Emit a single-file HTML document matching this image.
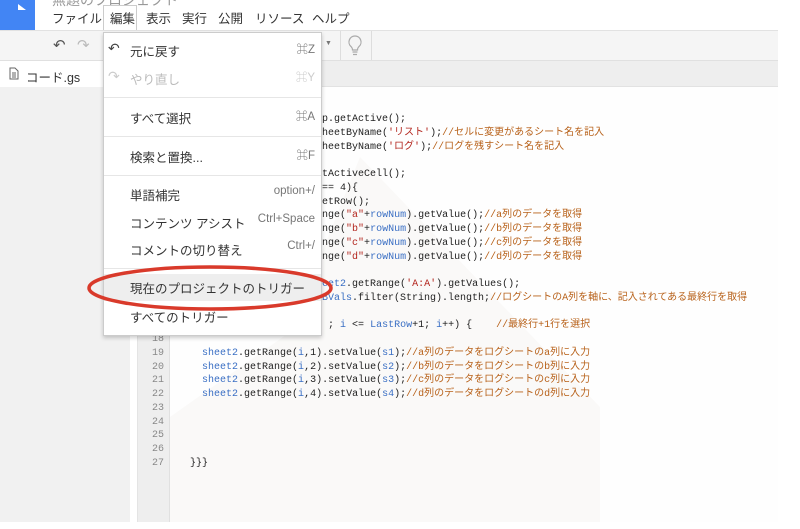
<!DOCTYPE html>
<html><head><meta charset="utf-8"><style>
*{margin:0;padding:0;box-sizing:border-box}
body{width:800px;height:529px;overflow:hidden;background:#fff;font-family:"Liberation Sans","Noto Sans CJK JP",sans-serif;position:relative}
.a{position:absolute;white-space:nowrap}
.mb{font-size:12.5px;color:#333;top:8px}
.code{font-family:"Liberation Mono","Noto Sans CJK JP",monospace;font-size:10px;color:#222;left:190px;line-height:13.75px;white-space:pre}
.c{color:#b8621b}.s{color:#b3261e}.v{color:#3a6fc4}
.ln{font-family:"Liberation Mono",monospace;font-size:10px;color:#888;left:140px;width:24px;text-align:right}
.mi{position:absolute;left:0;width:217px;height:27px;font-size:12.5px;color:#333}
.mi span{position:absolute;left:26px;top:4px}
.mi b{position:absolute;right:6px;top:4px;font-weight:normal;color:#777;font-size:11.5px}
.sep{position:absolute;left:0;width:217px;height:1px;background:#e6e6e6}
</style></head><body>
<div class="a" style="left:0;top:0;width:35px;height:30px;background:#4285f4"></div>
<svg class="a" style="left:6px;top:0" width="24" height="22"><path d="M4 10h8V4l8 6-8 0z" fill="#fff"/></svg>
<div class="a" style="left:52px;top:-10px;font-size:14px;color:#999">無題のプロジェクト</div>
<div class="a mb" style="left:52px">ファイル</div>
<div class="a" style="left:103px;top:5px;width:34px;height:28px;border:1px solid #ccc;border-bottom:none;background:#fff"></div>
<div class="a mb" style="left:110px">編集</div>
<div class="a mb" style="left:146px">表示</div>
<div class="a mb" style="left:182px">実行</div>
<div class="a mb" style="left:218px">公開</div>
<div class="a mb" style="left:255px">リソース</div>
<div class="a mb" style="left:312px">ヘルプ</div>
<div class="a" style="left:0;top:30px;width:778px;height:31px;background:#f5f5f5;border-top:1px solid #e2e2e2;border-bottom:1px solid #e0e0e0"></div>
<div class="a" style="left:53px;top:36px;font-size:15px;color:#555">↶</div>
<div class="a" style="left:77px;top:36px;font-size:15px;color:#bbb">↷</div>
<div class="a" style="left:340px;top:31px;width:1px;height:29px;background:#ddd"></div>
<div class="a" style="left:371px;top:31px;width:1px;height:29px;background:#ddd"></div>
<div class="a" style="left:325px;top:40px;font-size:7px;color:#777">▼</div>
<svg class="a" style="left:346px;top:33px" width="18" height="24"><path d="M9 3a6 6 0 0 0-4 10.5c1 1 1.5 2 1.5 3.5h5c0-1.5.5-2.5 1.5-3.5A6 6 0 0 0 9 3zM6.5 19h5M7 21.5h4" fill="none" stroke="#aaa" stroke-width="1.2"/></svg>
<div class="a" style="left:0;top:61px;width:778px;height:26px;background:#eee;border-bottom:1px solid #e2e2e2"></div>
<div class="a" style="left:0;top:61px;width:130px;height:26px;background:#fff"></div>
<svg class="a" style="left:9px;top:67px" width="10" height="13"><path d="M1 1h5l3 3v8H1z" fill="none" stroke="#666"/><path d="M3 6h4M3 8h4M3 10h4" stroke="#666"/></svg>
<div class="a" style="left:26px;top:67px;font-size:12.5px;color:#333">コード.gs</div>
<div class="a" style="left:0;top:87px;width:130px;height:435px;background:#f1f1f1"></div>
<div class="a" style="left:137px;top:87px;width:33px;height:435px;background:#eee;border-left:1px solid #e4e4e4;border-right:1px solid #e0e0e0"></div>
<div class="a" style="left:170px;top:87px;width:608px;height:435px;background:#fefefe"></div>
<svg class="a" style="left:170px;top:87px" width="608" height="435"><polygon points="0,330 120,245 190,70 430,320 430,435 0,435" fill="#faf9f8"/></svg>
<div class="a ln" style="top:334px">18</div>
<div class="a ln" style="top:348px">19</div>
<div class="a ln" style="top:362px">20</div>
<div class="a ln" style="top:375px">21</div>
<div class="a ln" style="top:389px">22</div>
<div class="a ln" style="top:403px">23</div>
<div class="a ln" style="top:417px">24</div>
<div class="a ln" style="top:430px">25</div>
<div class="a ln" style="top:444px">26</div>
<div class="a ln" style="top:458px">27</div>
<pre class="a code" style="top:113px">var ss = SpreadsheetApp.getActive();
  var sheet1 = ss.getSheetByName(<span class="s">'リスト'</span>);<span class="c">//セルに変更があるシート名を記入</span>
  var sheet2 = ss.getSheetByName(<span class="s">'ログ'</span>);<span class="c">//ログを残すシート名を記入</span>

  var cell = sheet1.getActiveCell();
  if(cell.getColumn() == 4){
   var rowNum = cell.getRow();
 var s1 = sheet1.getRange(<span class="s">"a"</span>+<span class="v">rowNum</span>).getValue();<span class="c">//a列のデータを取得</span>
 var s2 = sheet1.getRange(<span class="s">"b"</span>+<span class="v">rowNum</span>).getValue();<span class="c">//b列のデータを取得</span>
 var s3 = sheet1.getRange(<span class="s">"c"</span>+<span class="v">rowNum</span>).getValue();<span class="c">//c列のデータを取得</span>
 var s4 = sheet1.getRange(<span class="s">"d"</span>+<span class="v">rowNum</span>).getValue();<span class="c">//d列のデータを取得</span>

  var lastRowVals = <span class="v">sheet2</span>.getRange(<span class="s">'A:A'</span>).getValues();
  var LastRow = <span class="v">lastRABVals</span>.filter(String).length;<span class="c">//ログシートのA列を軸に、記入されてある最終行を取得</span>

  for(var i = start    ; <span class="v">i</span> &lt;= <span class="v">LastRow</span>+1; <span class="v">i</span>++) {    <span class="c">//最終行+1行を選択</span>

  <span class="v">sheet2</span>.getRange(<span class="v">i</span>,1).setValue(<span class="v">s1</span>);<span class="c">//a列のデータをログシートのa列に入力</span>
  <span class="v">sheet2</span>.getRange(<span class="v">i</span>,2).setValue(<span class="v">s2</span>);<span class="c">//b列のデータをログシートのb列に入力</span>
  <span class="v">sheet2</span>.getRange(<span class="v">i</span>,3).setValue(<span class="v">s3</span>);<span class="c">//c列のデータをログシートのc列に入力</span>
  <span class="v">sheet2</span>.getRange(<span class="v">i</span>,4).setValue(<span class="v">s4</span>);<span class="c">//d列のデータをログシートのd列に入力</span>




}}}</pre>
<div class="a" style="left:103px;top:32px;width:219px;height:304px;background:#fff;border:1px solid #ccc;box-shadow:0 2px 4px rgba(0,0,0,.2)">
 <div class="mi" style="top:4px"><div class="a" style="left:4px;top:3px;font-size:14px;color:#444">↶</div><span>元に戻す</span><b>⌘Z</b></div>
 <div class="mi" style="top:32px;color:#bbb"><div class="a" style="left:4px;top:3px;font-size:14px;color:#ccc">↷</div><span>やり直し</span><b style="color:#ccc">⌘Y</b></div>
 <div class="sep" style="top:64px"></div>
 <div class="mi" style="top:71px"><span>すべて選択</span><b>⌘A</b></div>
 <div class="sep" style="top:103px"></div>
 <div class="mi" style="top:110px"><span>検索と置換...</span><b>⌘F</b></div>
 <div class="sep" style="top:142px"></div>
 <div class="mi" style="top:148px"><span>単語補完</span><b>option+/</b></div>
 <div class="mi" style="top:176px"><span>コンテンツ アシスト</span><b>Ctrl+Space</b></div>
 <div class="mi" style="top:203px"><span>コメントの切り替え</span><b>Ctrl+/</b></div>
 <div class="sep" style="top:235px"></div>
 <div class="mi" style="top:241px;background:#eee"><span>現在のプロジェクトのトリガー</span></div>
 <div class="mi" style="top:270px"><span>すべてのトリガー</span></div>
</div>
<svg class="a" style="left:80px;top:258px" width="260" height="60"><ellipse cx="130" cy="30" rx="121" ry="21" fill="none" stroke="#d93a2b" stroke-width="3.5"/></svg>
</body></html>
